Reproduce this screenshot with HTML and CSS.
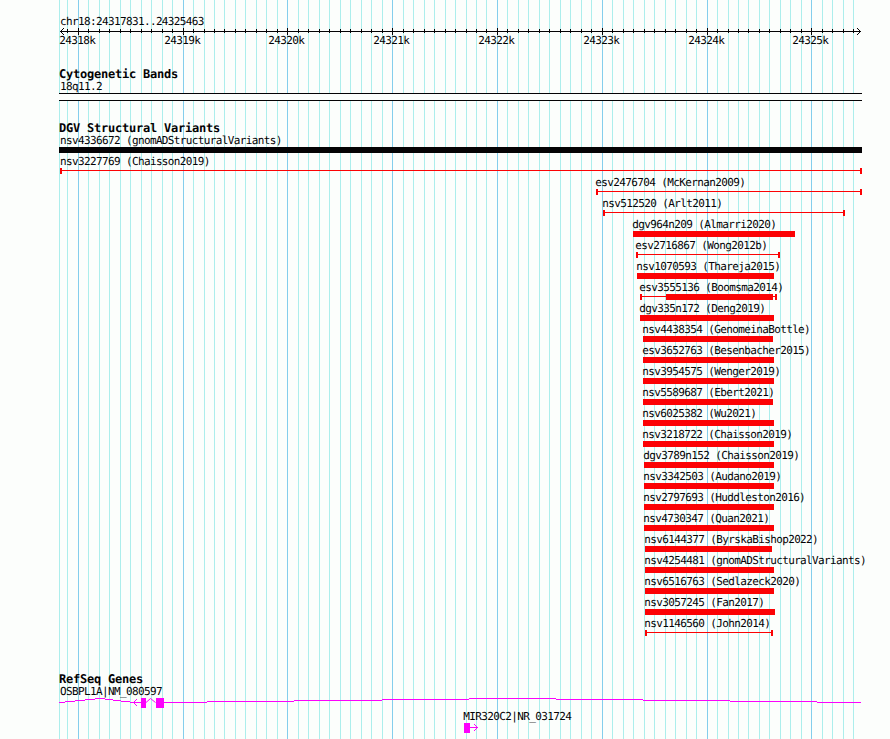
FILE: index.html
```html
<!DOCTYPE html>
<html lang="en">

<head>
    <meta charset="UTF-8">
    <meta name="viewport" content="width=device-width, initial-scale=1.0">
    <title>chr18:24317831..24325463</title>
    <link rel="stylesheet" href="styles.css">
</head>

<body>
    <div class="panel">
        <!-- grid lines, drawn by the script -->
        <svg class="grid" width="890" height="739">
            <path class="minor" id="minor" d="M59.5 0V739" />
            <path class="major" id="major" d="" />
        </svg>

        <div class="tracks">
            <div class="ruler">
                <div class="label wide">chr18:24317831..24325463</div>
                <svg viewBox="59 27 803 19" width="803" height="19">
                    <path class="axis" id="ticks" d="" />
                    <path class="axis" d="M60 31.5H861" />
                    <path class="head" d="M64 28L60.5 31.5L64 35M857 28L860.5 31.5L857 35" />
                    <text x="59.3" y="44">24318k</text>
                    <text x="164.3" y="44">24319k</text>
                    <text x="268.3" y="44">24320k</text>
                    <text x="373.3" y="44">24321k</text>
                    <text x="478.3" y="44">24322k</text>
                    <text x="583.3" y="44">24323k</text>
                    <text x="688.3" y="44">24324k</text>
                    <text x="792.3" y="44">24325k</text>
                </svg>
            </div>

            <div class="track cyto">
                <div class="title">Cytogenetic Bands</div>
                <div class="label wide">18q11.2</div>
                <div class="band"></div>
            </div>

            <div class="track variants">
                <div class="title">DGV Structural Variants</div>
                <div class="feature" style="margin-left:0px"><div class="label wide">nsv4336672 (gnomADStructuralVariants)</div><div class="bar black" style="width:803px"></div></div>
                <div class="feature" style="margin-left:1px"><div class="label first">nsv3227769 (Chaisson2019)</div><div class="range" style="width:802px"></div></div>
                <div class="feature" style="margin-left:537px"><div class="label">esv2476704 (McKernan2009)</div><div class="range" style="width:266px"></div></div>
                <div class="feature" style="margin-left:544px"><div class="label">nsv512520 (Arlt2011)</div><div class="range" style="width:242px"></div></div>
                <div class="feature" style="margin-left:574px"><div class="label">dgv964n209 (Almarri2020)</div><div class="bar" style="width:162px"></div></div>
                <div class="feature" style="margin-left:577px"><div class="label">esv2716867 (Wong2012b)</div><div class="range" style="width:144px"></div></div>
                <div class="feature" style="margin-left:578px"><div class="label">nsv1070593 (Thareja2015)</div><div class="bar" style="width:137px"></div></div>
                <div class="feature" style="margin-left:581px"><div class="label">esv3555136 (Boomsma2014)</div><div class="range" style="width:137px;padding-left:24px"><div class="bar" style="width:107px"></div></div></div>
                <div class="feature" style="margin-left:581px"><div class="label">dgv335n172 (Deng2019)</div><div class="bar" style="width:134px"></div></div>
                <div class="feature" style="margin-left:584px"><div class="label">nsv4438354 (GenomeinaBottle)</div><div class="bar" style="width:130px"></div></div>
                <div class="feature" style="margin-left:584px"><div class="label">esv3652763 (Besenbacher2015)</div><div class="bar" style="width:131px"></div></div>
                <div class="feature" style="margin-left:584px"><div class="label">nsv3954575 (Wenger2019)</div><div class="bar" style="width:131px"></div></div>
                <div class="feature" style="margin-left:584px"><div class="label">nsv5589687 (Ebert2021)</div><div class="bar" style="width:130px"></div></div>
                <div class="feature" style="margin-left:584px"><div class="label">nsv6025382 (Wu2021)</div><div class="bar" style="width:131px"></div></div>
                <div class="feature" style="margin-left:584px"><div class="label">nsv3218722 (Chaisson2019)</div><div class="bar" style="width:131px"></div></div>
                <div class="feature" style="margin-left:585px"><div class="label">dgv3789n152 (Chaisson2019)</div><div class="bar" style="width:130px"></div></div>
                <div class="feature" style="margin-left:585px"><div class="label">nsv3342503 (Audano2019)</div><div class="bar" style="width:130px"></div></div>
                <div class="feature" style="margin-left:585px"><div class="label">nsv2797693 (Huddleston2016)</div><div class="bar" style="width:130px"></div></div>
                <div class="feature" style="margin-left:585px"><div class="label">nsv4730347 (Quan2021)</div><div class="bar" style="width:130px"></div></div>
                <div class="feature" style="margin-left:586px"><div class="label">nsv6144377 (ByrskaBishop2022)</div><div class="bar" style="width:127px"></div></div>
                <div class="feature" style="margin-left:586px"><div class="label">nsv4254481 (gnomADStructuralVariants)</div><div class="bar" style="width:129px"></div></div>
                <div class="feature" style="margin-left:586px"><div class="label">nsv6516763 (Sedlazeck2020)</div><div class="bar" style="width:129px"></div></div>
                <div class="feature" style="margin-left:586px"><div class="label">nsv3057245 (Fan2017)</div><div class="bar" style="width:130px"></div></div>
                <div class="feature" style="margin-left:586px"><div class="label">nsv1146560 (John2014)</div><div class="range" style="width:128px"></div></div>
            </div>

            <div class="track genes">
                <div class="title">RefSeq Genes</div>
                <div class="label wide">OSBPL1A|NM_080597</div>
                <svg viewBox="59 697 803 13" width="803" height="13">
                    <!-- introns -->
                    <path class="intron" d="M59 702.5h6M65 701.5h10M75 700.5h10M85 699.5h10M95 698.5h10M105 699.5h8M113 700.5h8M121 701.5h9M130 702.5h11" />
                    <path class="intron" d="M164 702.5h43M207 701.5h87M294 700.5h88M382 699.5h87M469 698.5h87M556 699.5h87M643 700.5h87M730 701.5h87M817 702.5h44" />
                    <path class="head pink" d="M146 702.5L150.5 698.5L155.5 702.5M137 699L133.5 702.5L137 706" />
                    <!-- exons -->
                    <path class="exon" d="M141 698h5v10h-5zM156 698h8v10h-8z" />
                </svg>
                <div class="gene" style="margin-left:405px">
                    <div class="label">MIR320C2|NR_031724</div>
                    <svg viewBox="464 722 16 13" width="16" height="13">
                        <path class="exon" d="M464 723h6v10h-6z" />
                        <path class="intron" d="M470 727.5h8" />
                        <path class="head pink" d="M474 724L477.5 727.5L474 731" />
                    </svg>
                </div>
            </div>
        </div>
    </div>
    <script>
        // one line every 100bp, a darker one every 1000bp
        var minor = document.getElementById('minor');
        var major = document.getElementById('major');
        var ticks = document.getElementById('ticks');
        var minorPath = 'M59.5 0V739';
        var majorPath = '';
        var tickPath = '';
        for (var i = -1; i < 75; i++) {
            var x = Math.floor(78.25 + i * 10.48) + 0.5;
            if (i % 10 == 0) {
                majorPath += 'M' + x + ' 0V739';
                tickPath += 'M' + x + ' 28V35';
            } else {
                minorPath += 'M' + x + ' 0V739';
                tickPath += 'M' + x + ' 29V33';
            }
        }
        minor.setAttribute('d', minorPath);
        major.setAttribute('d', majorPath);
        ticks.setAttribute('d', tickPath);
    </script>
</body>

</html>
```
FILE: styles.css
```css
body {
    margin: 0;
    background-color: #fcfefc;
    color: #040204;
}

.panel {
    position: relative;
    width: 890px;
    height: 739px;
    overflow: hidden;
    font: 11px/12px "DejaVu Sans Mono", monospace;
    letter-spacing: -0.63px;
    text-rendering: geometricPrecision;
    white-space: nowrap;
}

/* grid lies under all tracks */
.grid {
    position: absolute;
    top: 0;
    left: 0;
}

.grid path {
    fill: none;
    shape-rendering: crispEdges;
}

.minor {
    stroke: #aceeec;
}

.major {
    stroke: #84ceec;
}

.tracks {
    position: relative;
    width: 803px;
    padding: 15px 0 0 59px;
}

.tracks svg {
    display: block;
}

.label {
    height: 12px;
    line-height: 14px;
    margin-left: -0.7px;
}

.label.wide {
    margin-left: 1px;
}

.label.first {
    margin-left: 0;
}

.title {
    height: 12px;
    font-size: 12px;
    font-weight: bold;
    letter-spacing: -0.22px;
}

.axis {
    fill: none;
    stroke: #040204;
    shape-rendering: crispEdges;
}

.head {
    fill: none;
    stroke: #040204;
}

.cyto {
    margin-top: 22px;
}

.band {
    box-sizing: border-box;
    height: 8px;
    margin-top: 1px;
    border-top: 1px solid #040204;
    border-bottom: 1px solid #040204;
    background-color: #fcfefc;
}

.variants {
    margin-top: 21px;
}

.feature {
    height: 21px;
}

.feature .label {
    margin-bottom: 1px;
}

.bar {
    height: 6px;
    background-color: #fc0204;
}

.bar.black {
    background-color: #040204;
}

/* thin line with a cap on both ends */
.range {
    box-sizing: border-box;
    height: 6px;
    border: solid #fc0204;
    border-width: 0 2px;
    background: linear-gradient(#fc0204, #fc0204) 0 2px / 100% 1px no-repeat;
}

.genes {
    margin-top: 35px;
}

.intron {
    fill: none;
    stroke: #fc02fc;
    shape-rendering: crispEdges;
}

.exon {
    fill: #fc02fc;
}

.head.pink {
    stroke: #fc02fc;
}
```
